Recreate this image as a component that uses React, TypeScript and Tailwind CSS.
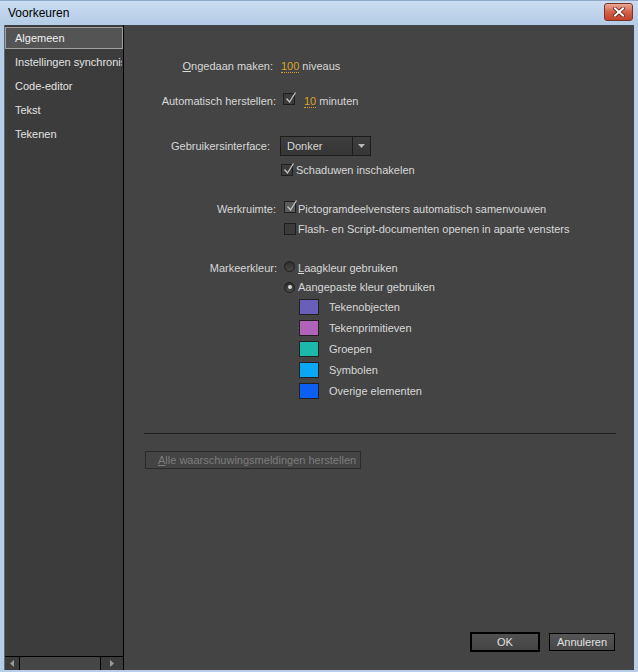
import React from 'react';

// Small checkbox in the dark Flash style
function Check({ checked, light }: { checked?: boolean; light?: boolean }) {
  return (
    <span
      className={`relative inline-block w-[12px] h-[12px] shrink-0 border border-[#1e1e1e] ${
        light ? 'bg-[#5a5a5a]' : 'bg-[#3b3b3b]'
      }`}
    >
      {checked && (
        <svg className="absolute left-[1px] top-[-3px] overflow-visible" width="12" height="13" viewBox="0 0 12 13">
          <path d="M1.5 7.5 L4.5 11 L10.5 1.5" fill="none" stroke="#c6c6c6" strokeWidth="1.3" />
        </svg>
      )}
    </span>
  );
}

function Radio({ selected }: { selected?: boolean }) {
  return (
    <span className="inline-flex items-center justify-center w-[11px] h-[11px] shrink-0 rounded-full border border-[#1e1e1e] bg-gradient-to-b from-[#2e2e2e] to-[#4a4a4a]">
      {selected && <span className="block w-[4px] h-[4px] rounded-full bg-[#d8d8d8]" />}
    </span>
  );
}

function Value({ children }: { children: React.ReactNode }) {
  return (
    <span className="text-[#d7a423] border-b border-dotted border-[#d7a423] leading-[13px]">{children}</span>
  );
}

const swatches = [
  { color: 'bg-[#6a5fb8]', label: 'Tekenobjecten' },
  { color: 'bg-[#b063b8]', label: 'Tekenprimitieven' },
  { color: 'bg-[#1bb9aa]', label: 'Groepen' },
  { color: 'bg-[#0ba6f4]', label: 'Symbolen' },
  { color: 'bg-[#0b60f2]', label: 'Overige elementen' },
];

const menu = ['Algemeen', 'Instellingen synchronis', 'Code-editor', 'Tekst', 'Tekenen'];

export default function App() {
  return (
    <div className="w-[638px] h-[672px] bg-[#b6cee8] flex flex-col font-['Liberation_Sans',Arial,sans-serif] text-[11px] text-[#d8d8d8] overflow-hidden">
      {/* title bar */}
      <div className="h-[25px] shrink-0 flex items-center justify-between pl-[8px] pr-[5px] bg-gradient-to-b from-[#cadcf0] to-[#b4cce7] border-t border-[#8ea9c8]">
        <span className="text-[12px] text-black">Voorkeuren</span>
        <div className="w-[29px] h-[18px] mb-[3px] rounded-[3px] border border-[#7a3325] bg-gradient-to-b from-[#e9a898] via-[#d45f48] to-[#c2432c] flex items-center justify-center">
          <svg width="12" height="10" viewBox="0 0 12 10">
            <path d="M2 1.5 L10 8.5 M10 1.5 L2 8.5" stroke="#5a2018" strokeWidth="3.6" strokeLinecap="square" />
            <path d="M2 1.5 L10 8.5 M10 1.5 L2 8.5" stroke="#ffffff" strokeWidth="2" strokeLinecap="square" />
          </svg>
        </div>
      </div>

      {/* body */}
      <div className="flex-1 flex ml-[4px] mr-[4px] mb-[2px] min-h-0 border-l border-[#5d6d80]">
        {/* sidebar */}
        <div className="w-[119px] shrink-0 bg-[#3c3c3c] border-r border-black flex flex-col">
          <div className="flex-1 flex flex-col pt-[2px]">
            {menu.map((item, i) => (
              <div
                key={item}
                className={`h-[22px] mb-[2px] flex items-center pl-[9px] whitespace-nowrap overflow-hidden ${
                  i === 0 ? 'bg-[#545454] border border-[#a0a0a0] text-[#f0f0f0]' : 'border border-transparent text-[#e2e2e2]'
                }`}
              >
                {item}
              </div>
            ))}
          </div>
          {/* horizontal scrollbar */}
          <div className="h-[14px] border-t border-black flex items-center">
            <div className="w-[14px] flex justify-center">
              <svg width="4" height="7" viewBox="0 0 4 7"><path d="M4 0 L0 3.5 L4 7 Z" fill="#9a9a9a" /></svg>
            </div>
            <div className="w-[82px] h-[13px] border-x border-black bg-[#464646]" />
            <div className="flex-1 flex justify-center">
              <svg width="4" height="7" viewBox="0 0 4 7"><path d="M0 0 L4 3.5 L0 7 Z" fill="#9a9a9a" /></svg>
            </div>
          </div>
        </div>

        {/* main panel */}
        <div className="flex-1 bg-[#444444] flex flex-col pb-[18px]">
          {/* Ongedaan maken */}
          <div className="mt-[33px] h-[16px] flex items-center">
            <span className="w-[149px] text-right">
              <span className="underline">O</span>ngedaan maken:
            </span>
            <span className="ml-[8px]"><Value>100</Value></span>
            <span className="ml-[3px]">niveaus</span>
          </div>

          {/* Automatisch herstellen */}
          <div className="mt-[19px] h-[16px] flex items-center">
            <span className="w-[152px] text-right">Automatisch herstellen:</span>
            <span className="ml-[7px]"><Check checked /></span>
            <span className="ml-[9px]"><Value>10</Value></span>
            <span className="ml-[3px]">minuten</span>
          </div>

          {/* Gebruikersinterface */}
          <div className="mt-[27px] h-[20px] flex items-center">
            <span className="w-[146px] text-right">Gebruikersinterface:</span>
            <div className="ml-[10px] w-[91px] h-[20px] flex border border-[#1c1c1c] bg-gradient-to-b from-[#3e3e3e] to-[#363636]">
              <span className="flex-1 flex items-center pl-[6px]">Donker</span>
              <span className="w-[18px] border-l border-[#1c1c1c] flex items-center justify-center">
                <svg width="7" height="4" viewBox="0 0 7 4"><path d="M0 0 L7 0 L3.5 4 Z" fill="#b8b8b8" /></svg>
              </span>
            </div>
          </div>
          <div className="mt-[6px] h-[16px] flex items-center pl-[157px]">
            <Check checked />
            <span className="ml-[3px]">Schaduwen inschakelen</span>
          </div>

          {/* Werkruimte */}
          <div className="mt-[23px] h-[16px] flex items-center">
            <span className="w-[152px] text-right">Werkruimte:</span>
            <span className="ml-[8px]"><Check checked light /></span>
            <span className="ml-[2px]">Pictogramdeelvensters automatisch samenvouwen</span>
          </div>
          <div className="mt-[4px] h-[16px] flex items-center pl-[160px]">
            <Check />
            <span className="ml-[2px]">Flash- en Script-documenten openen in aparte vensters</span>
          </div>

          {/* Markeerkleur */}
          <div className="mt-[23px] h-[16px] flex items-center">
            <span className="w-[153px] text-right">Markeerkleur:</span>
            <span className="ml-[7px]"><Radio /></span>
            <span className="ml-[3px]">
              <span className="underline">L</span>aagkleur gebruiken
            </span>
          </div>
          <div className="mt-[3px] h-[16px] flex items-center pl-[160px]">
            <Radio selected />
            <span className="ml-[3px]">Aangepaste kleur gebruiken</span>
          </div>

          <div className="mt-[4px] flex flex-col gap-[5px] pl-[175px]">
            {swatches.map((s) => (
              <div key={s.label} className="h-[16px] flex items-center">
                <span className={`w-[20px] h-[16px] border border-[#202020] ${s.color}`} />
                <span className="ml-[10px]">{s.label}</span>
              </div>
            ))}
          </div>

          {/* separator */}
          <div className="mt-[34px] ml-[20px] mr-[18px] h-px bg-[#1e1e1e]" />

          <div className="mt-[17px] ml-[21px]">
            <div className="w-[216px] h-[18px] border border-[#2a2a2a] flex items-center pl-[12px] text-[#7c7c7c]">
              <span className="underline">A</span>lle waarschuwingsmeldingen herstellen
            </div>
          </div>

          {/* dialog buttons */}
          <div className="mt-auto flex items-center justify-end pr-[19px] gap-[9px]">
            <button className="w-[70px] h-[20px] border-2 border-black bg-gradient-to-b from-[#505050] to-[#444444] text-[#e0e0e0] text-[11px]">
              OK
            </button>
            <button className="w-[66px] h-[18px] border border-black bg-gradient-to-b from-[#555555] to-[#474747] text-[#e0e0e0] text-[11px]">
              Annuleren
            </button>
          </div>
        </div>
      </div>
    </div>
  );
}
